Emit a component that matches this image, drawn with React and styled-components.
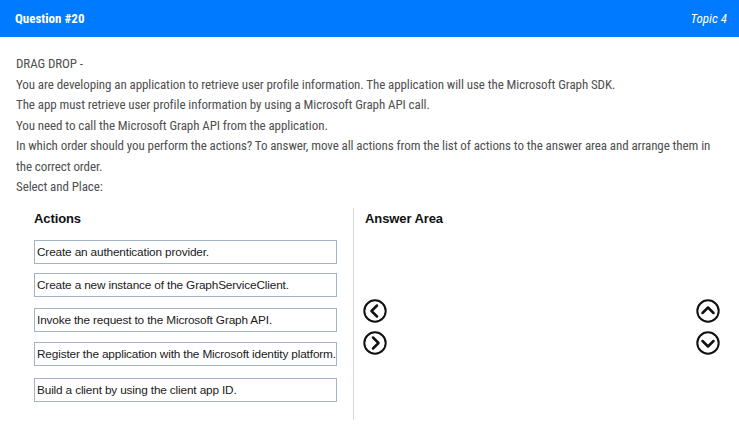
import React from "react";
import styled, { createGlobalStyle } from "styled-components";

const GlobalStyle = createGlobalStyle`
  html, body {
    margin: 0;
    padding: 0;
    background: #ffffff;
  }
`;

const Card = styled.div`
  width: 739px;
  height: 437px;
  overflow: hidden;
  background: #fff;
  font-family: "Roboto Condensed", Roboto, sans-serif;
`;

const Header = styled.header`
  display: flex;
  align-items: center;
  justify-content: space-between;
  height: 37px;
  padding: 0 12px 0 15px;
  background: #007bff;
  color: #fff;
  font-size: 13px;
`;

const Title = styled.span`
  font-weight: 700;
`;

const Topic = styled.span`
  font-style: italic;
`;

const Body = styled.div`
  padding: 17px 16px 0 16px;
`;

const Line = styled.p`
  margin: 0;
  font-size: 13px;
  line-height: 20.5px;
  letter-spacing: -0.09px;
  color: #505050;
  white-space: nowrap;
`;

const Figure = styled.div`
  display: flex;
  margin: 10px 0 0 18px;
  font-family: "Liberation Sans", Arial, sans-serif;
  color: #111;
`;

const ActionsCol = styled.div`
  width: 303px;
  padding: 3px 16px 0 0;
`;

const Divider = styled.div`
  width: 1px;
  height: 212px;
  background: #d8d8d8;
`;

const AnswerCol = styled.div`
  flex: 1;
  display: flex;
  flex-direction: column;
  padding: 3px 3px 0 9px;
`;

const Heading = styled.h3`
  margin: 0 0 0 ${(p) => p.$indent || 0}px;
  font-size: 13px;
  font-weight: 700;
  line-height: 16px;
  letter-spacing: -0.1px;
`;

const ActionList = styled.div`
  display: flex;
  flex-direction: column;
  margin-top: 13px;
`;

const ActionBox = styled.div`
  box-sizing: border-box;
  height: 24px;
  margin-top: ${(p) => p.$gap}px;
  padding: 0 2px;
  display: flex;
  align-items: center;
  border: 1px solid #a3b4c6;
  font-size: 11.8px;
  letter-spacing: -0.15px;
  white-space: nowrap;
  color: #1a1a1a;
`;

const Controls = styled.div`
  display: flex;
  justify-content: space-between;
  margin-top: 72px;
`;

const ArrowStack = styled.div`
  display: flex;
  flex-direction: column;
  gap: 8px;
`;

function ArrowIcon({ dir }) {
  const paths = {
    left: "M14 6.5 L8.5 12 L14 17.5",
    right: "M10 6.5 L15.5 12 L10 17.5",
    up: "M6.5 14 L12 8.5 L17.5 14",
    down: "M6.5 10 L12 15.5 L17.5 10",
  };
  return (
    <svg width="24" height="24" viewBox="0 0 24 24" fill="none">
      <circle cx="12" cy="12" r="10.7" stroke="#111" strokeWidth="2" />
      <path d={paths[dir]} stroke="#111" strokeWidth="2.5" strokeLinecap="round" strokeLinejoin="round" />
    </svg>
  );
}

const lines = [
  "DRAG DROP -",
  "You are developing an application to retrieve user profile information. The application will use the Microsoft Graph SDK.",
  "The app must retrieve user profile information by using a Microsoft Graph API call.",
  "You need to call the Microsoft Graph API from the application.",
  "In which order should you perform the actions? To answer, move all actions from the list of actions to the answer area and arrange them in",
  "the correct order.",
  "Select and Place:",
];

const actions = [
  { text: "Create an authentication provider.", gap: 0 },
  { text: "Create a new instance of the GraphServiceClient.", gap: 9 },
  { text: "Invoke the request to the Microsoft Graph API.", gap: 11 },
  { text: "Register the application with the Microsoft identity platform.", gap: 10 },
  { text: "Build a client by using the client app ID.", gap: 12 },
];

export default function App() {
  return (
    <>
      <GlobalStyle />
      <Card>
        <Header>
          <Title>Question #20</Title>
          <Topic>Topic 4</Topic>
        </Header>
        <Body>
          {lines.map((l) => (
            <Line key={l}>{l}</Line>
          ))}
          <Figure>
            <ActionsCol>
              <Heading>Actions</Heading>
              <ActionList>
                {actions.map((a) => (
                  <ActionBox key={a.text} $gap={a.gap}>
                    {a.text}
                  </ActionBox>
                ))}
              </ActionList>
            </ActionsCol>
            <Divider />
            <AnswerCol>
              <Heading $indent={2}>Answer Area</Heading>
              <Controls>
                <ArrowStack>
                  <ArrowIcon dir="left" />
                  <ArrowIcon dir="right" />
                </ArrowStack>
                <ArrowStack>
                  <ArrowIcon dir="up" />
                  <ArrowIcon dir="down" />
                </ArrowStack>
              </Controls>
            </AnswerCol>
          </Figure>
        </Body>
      </Card>
    </>
  );
}
